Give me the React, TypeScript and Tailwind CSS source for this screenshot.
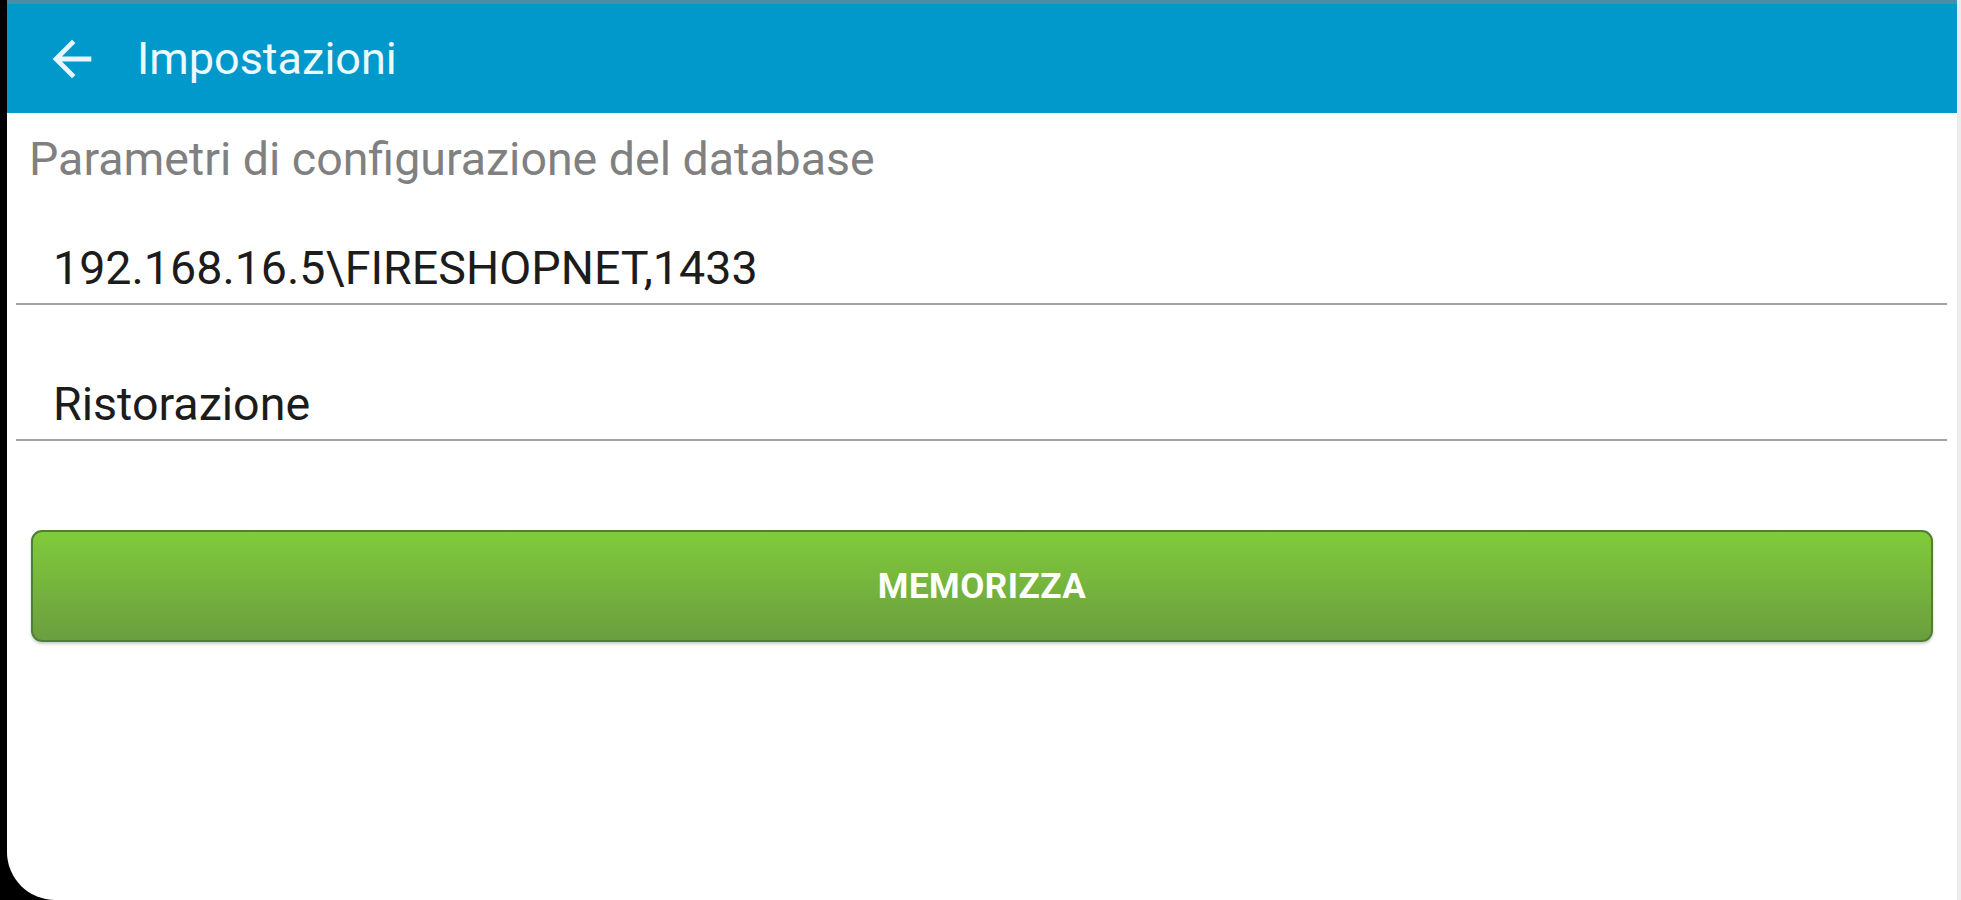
import React from 'react'

function BackArrow() {
  return (
    <svg viewBox="0 0 24 24" className="w-[58px] h-[58px] shrink-0" fill="#e8f6fb">
      <path d="M20 11H7.83l5.59-5.59L12 4l-8 8 8 8 1.41-1.41L7.83 13H20v-2z" />
    </svg>
  )
}

function Field({ value, className }: { value: string; className?: string }) {
  return (
    <div className={`ml-[9px] mr-[10px] border-b-[2px] border-[#a3a3a3] ${className ?? ''}`}>
      <div className="h-[70px] flex items-center pl-[37px] text-[46.6px] text-[#1c1c1c] leading-none">
        {value}
      </div>
    </div>
  )
}

export default function App() {
  return (
    <div className="w-[1961px] h-[900px] bg-black flex overflow-hidden" style={{ fontFamily: 'Roboto, "Liberation Sans", sans-serif' }}>
      <div className="flex-1 ml-[7px] bg-white rounded-bl-[48px] overflow-hidden flex flex-col">
        <div className="h-[4px] bg-[#4a8da8]" />
        <div className="h-[109px] bg-[#0199cb] flex items-center">
          <div className="ml-[36px]">
            <BackArrow />
          </div>
          <span className="ml-[36px] text-[45px] text-[#eef9fd] leading-none">Impostazioni</span>
        </div>

        <div className="h-[92px] flex items-center pl-[22px] text-[46.5px] text-[#808080] leading-none">
          Parametri di configurazione del database
        </div>

        <Field value="192.168.16.5\FIRESHOPNET,1433" className="mt-[28px]" />
        <Field value="Ristorazione" className="mt-[64px]" />

        <button className="mt-[89px] mx-[24px] h-[112px] rounded-[11px] border-[2px] border-[#4f7e37] bg-gradient-to-b from-[#80cb3a] to-[#6b9e3f] shadow-[0_2px_3px_rgba(0,0,0,0.2)] flex items-center justify-center">
          <span className="text-[35px] font-bold text-white leading-none tracking-[0.5px]">MEMORIZZA</span>
        </button>
      </div>
      <div className="w-[4px] bg-[#ececec]" />
    </div>
  )
}
